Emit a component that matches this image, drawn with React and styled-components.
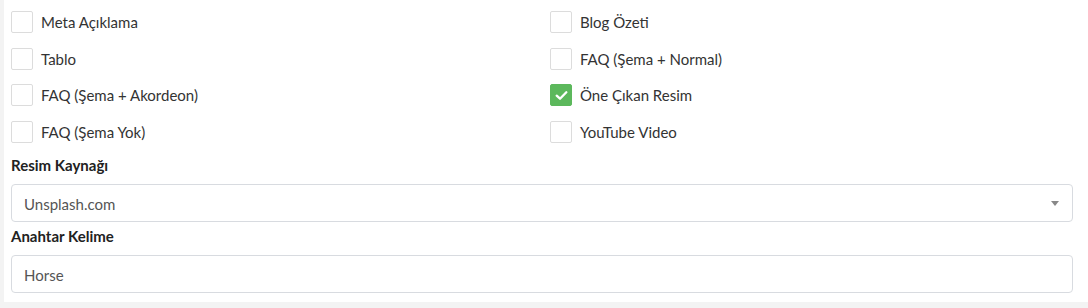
import styled, { createGlobalStyle } from 'styled-components'

const Global = createGlobalStyle`
body{
  margin:0;
  background:#f3f3f3;
  font-family:'Lato', 'Noto Sans', sans-serif;
  color:#333;
}
`

const Panel = styled.div`
margin-left:4px;
height:302px;
background:#fff;
padding:11px 15px 0 7px;
box-sizing:border-box;
`

const Options = styled.div`
display:grid;
grid-template-columns:539px 1fr;
row-gap:14.7px;
`

const Option = styled.label`
display:flex;
align-items:center;
gap:8px;
height:22px;
font-size:15px;
cursor:pointer;
`

const Box = styled.span`
width:22px;
height:22px;
box-sizing:border-box;
border-radius:2px;
border:1px solid ${p => p.checked ? '#5cb85c' : '#dcdcdc'};
background:${p => p.checked ? '#5cb85c' : '#fff'};
display:flex;
align-items:center;
justify-content:center;
flex-shrink:0;
`

const Field = styled.div`
display:flex;
flex-direction:column;
margin-top:${p => p.top}px;
`

const Label = styled.div`
font-size:15px;
font-weight:700;
line-height:20px;
color:#222;
margin-bottom:9px;
`

const Control = styled.div`
height:38px;
box-sizing:border-box;
border:1px solid #d8dbe0;
border-radius:4px;
display:flex;
align-items:center;
justify-content:space-between;
padding:1px 12px 0;
font-size:15px;
color:#555;
`

const Arrow = styled.span`
width:0;
height:0;
border-left:4px solid transparent;
border-right:4px solid transparent;
border-top:5px solid #888;
margin-right:1px;
`

const items = [
  ['Meta Açıklama', false],
  ['Blog Özeti', false],
  ['Tablo', false],
  ['FAQ (Şema + Normal)', false],
  ['FAQ (Şema + Akordeon)', false],
  ['Öne Çıkan Resim', true],
  ['FAQ (Şema Yok)', false],
  ['YouTube Video', false],
]

function Check(){
  return(
    <svg width="15" height="15" viewBox="0 0 14 14">
      <path d="M2.5 7.2 L5.6 10 L11.5 4" fill="none" stroke="#fff" strokeWidth="2.2" strokeLinecap="round" strokeLinejoin="round" />
    </svg>
  )
}

export default function App(){
  return(
    <>
      <Global />
      <Panel>
        <Options>
          {items.map(([text, checked]) => (
            <Option key={text}>
              <Box checked={checked}>{checked && <Check />}</Box>
              {text}
            </Option>
          ))}
        </Options>
        <Field top={12}>
          <Label>Resim Kaynağı</Label>
          <Control>
            Unsplash.com
            <Arrow />
          </Control>
        </Field>
        <Field top={4}>
          <Label>Anahtar Kelime</Label>
          <Control>Horse</Control>
        </Field>
      </Panel>
    </>
  )
}
